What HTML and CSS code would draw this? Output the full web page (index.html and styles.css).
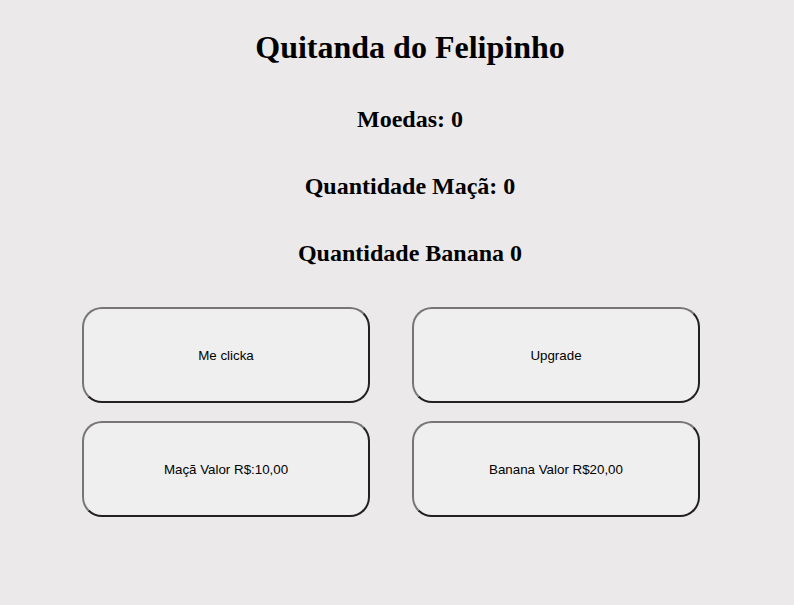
FILE: index.html
```html
<!DOCTYPE html>
<html>
<head>
<meta charset="utf-8">
<link rel="stylesheet" href="styles.css">
</head>
<body>
<div class="page">
  <div class="heading">
    <h1 class="title">Quitanda do Felipinho</h1>
    <h2 class="stat">Moedas: 0</h2>
    <h2 class="stat">Quantidade Maçã: 0</h2>
    <h2 class="stat">Quantidade Banana 0</h2>
  </div>
  <div class="actions">
    <button class="btn">Me clicka</button>
    <button class="btn">Upgrade</button>
    <button class="btn">Maçã Valor R$:10,00</button>
    <button class="btn">Banana Valor R$20,00</button>
  </div>
</div>
</body>
</html>
```

FILE: styles.css
```css
html, body {
  background: #ebe9e9;
}
body {
  margin: 8px;
  font-family: "Liberation Serif", "Times New Roman", serif;
  color: #000;
}
.page {
  display: flex;
  flex-direction: column;
}
.heading {
  display: flex;
  flex-direction: column;
  align-items: center;
  padding-left: 26px;
}
.title {
  font-size: 32px;
  font-weight: bold;
  margin: 21.44px 0 19.5px;
}
.stat {
  font-size: 24px;
  font-weight: bold;
  margin: 19.92px 0 20.2px;
}
.actions {
  display: grid;
  grid-template-columns: 288px 288px;
  column-gap: 42px;
  row-gap: 18px;
  padding-left: 74px;
  margin-top: 20px;
}
.btn {
  height: 96px;
  border-radius: 20px;
  border: 2px outset #767676;
  background: #efefef;
  font-family: "Liberation Sans", Arial, sans-serif;
  font-size: 13.33px;
  color: #000;
}
```
